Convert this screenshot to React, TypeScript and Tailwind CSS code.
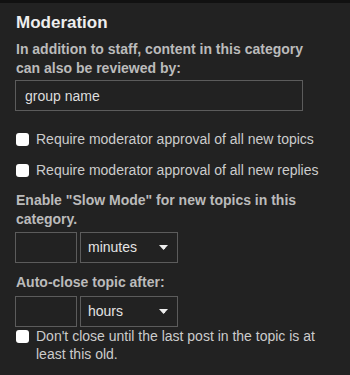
export default function App() {
  return (
    <div
      className="min-h-screen bg-[#222222] border-t-[3px] border-[#111111] px-[15px] pt-[10px] pb-4 text-[14px]"
      style={{ fontFamily: '"Liberation Sans", Arial, sans-serif' }}
    >
      <h3 className="text-[17px] leading-[20px] font-bold text-[#eeeeee] pl-px">Moderation</h3>

      <p className="mt-[7px] leading-[19px] font-bold text-[#bbbbbb] pl-px">
        In addition to staff, content in this category
        <br />
        can also be reviewed by:
      </p>
      <input
        type="text"
        defaultValue="group name"
        className="mt-[2px] block w-[288px] h-[31px] border border-[#5c5c5c] bg-[#222222] px-[9px] text-[14px] text-[#dddddd] outline-none"
      />

      {/* Approval checkboxes */}
      <label className="mt-[19px] flex items-center gap-[7px] leading-[19px] text-[#cccccc]">
        <span className="ml-px w-[13px] h-[13px] rounded-[3px] bg-white shrink-0" />
        Require moderator approval of all new topics
      </label>
      <label className="mt-[12px] flex items-center gap-[7px] leading-[19px] text-[#cccccc]">
        <span className="ml-px w-[13px] h-[13px] rounded-[3px] bg-white shrink-0" />
        Require moderator approval of all new replies
      </label>

      {/* Slow mode */}
      <p className="mt-[11px] leading-[19px] font-bold text-[#bbbbbb] pl-px">
        Enable "Slow Mode" for new topics in this
        <br />
        category.
      </p>
      <div className="mt-[3px] flex gap-[3px]">
        <input
          type="text"
          className="w-[62px] h-[31px] border border-[#5c5c5c] bg-[#222222] outline-none"
        />
        <Select label="minutes" />
      </div>

      {/* Auto close */}
      <p className="mt-[10px] leading-[19px] font-bold text-[#bbbbbb] pl-px">Auto-close topic after:</p>
      <div className="mt-[4px] flex gap-[3px]">
        <input
          type="text"
          className="w-[62px] h-[31px] border border-[#5c5c5c] bg-[#222222] outline-none"
        />
        <Select label="hours" />
      </div>
      <label className="flex items-start gap-[7px] leading-[18px] text-[#cccccc]">
        <span className="ml-px mt-[3px] w-[13px] h-[13px] rounded-[3px] bg-white shrink-0" />
        <span>
          Don't close until the last post in the topic is at
          <br />
          least this old.
        </span>
      </label>
    </div>
  );
}

function Select({ label }: { label: string }) {
  return (
    <div className="w-[98px] h-[31px] border border-[#5c5c5c] bg-[#222222] flex items-center justify-between pl-[7px] pr-[7px]">
      <span className="text-[#e4e4e4]">{label}</span>
      <svg width="9" height="5" viewBox="0 0 9 5" className="mr-[2px]">
        <path d="M0 0H9L4.5 5Z" fill="#eeeeee" />
      </svg>
    </div>
  );
}
